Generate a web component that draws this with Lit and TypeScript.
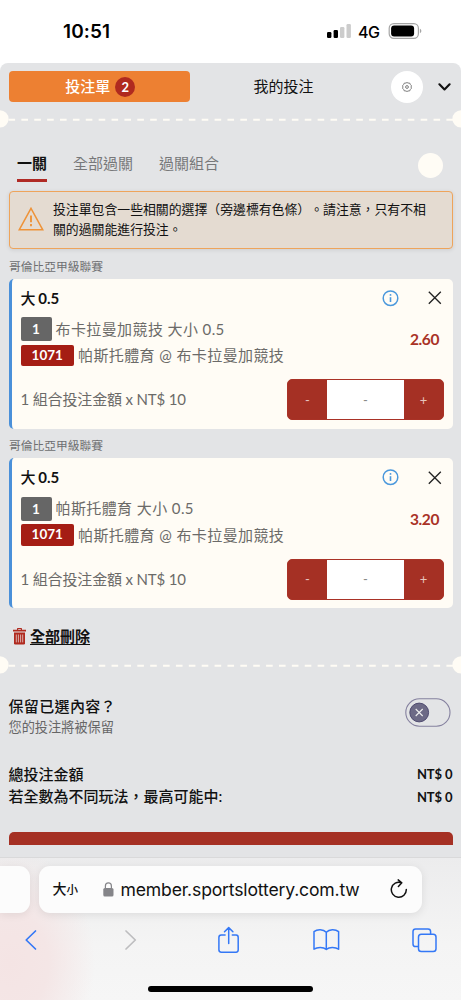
import { LitElement, html, css } from "lit";
import { customElement, property } from "lit/decorators.js";

const shared = css`
  * { box-sizing: border-box; }
  svg { display: block; flex: none; }
  span, a, b { white-space: nowrap; }
`;

@customElement("ticket-divider")
class TicketDivider extends LitElement {
  static styles = [shared, css`:host { display: block; height: 18px; flex: none; }`];
  render() {
    return html`<svg width="461" height="18" viewBox="0 0 461 18">
      <circle cx="0" cy="8.9" r="8.6" fill="#fffcf5" />
      <circle cx="461" cy="8.9" r="8.6" fill="#fffcf5" />
      <path d="M8.5 9.7H461" stroke="#fffcf5" stroke-width="2" stroke-dasharray="6.6 6.28" />
    </svg>`;
  }
}

@customElement("bet-card")
class BetCard extends LitElement {
  @property() league = "";
  @property() market = "";
  @property() odds = "";

  static styles = [shared, css`
    :host { display: block; }
    .league { height: 24px; line-height: 24px; font-size: 11.75px; color: #6e6f71; padding-left: .5px; }
    .card {
      height: 150px; border-radius: 5px; border-left: 3px solid #4a90d9; background: #fffcf5;
      padding: 7.5px 8.5px 0 9px; display: flex; flex-direction: column; color: #6b6a68;
    }
    .head { display: flex; align-items: center; height: 24px; }
    .title { font-size: 15px; font-weight: 500; color: #111; flex: 1; word-spacing: -1px; line-height: 20px; padding-bottom: 1px; }
    .title b { font-weight: 700; }
    .info { margin-right: 29px; }
    .close { margin-right: 2px; }
    .mid { display: flex; justify-content: space-between; margin-top: 7px; height: 50px; }
    .lines { display: flex; flex-direction: column; gap: 3px; }
    .line { display: flex; align-items: center; height: 24px; font-size: 15px; letter-spacing: .4px; gap: 4px; }
    .text { line-height: 20px; padding-bottom: .5px; }
    .tag { color: #fff; font-weight: 700; font-size: 13.5px; border-radius: 2px; text-align: center; letter-spacing: 0; }
    .one { width: 31px; height: 24px; line-height: 24px; background: #666; }
    .code { width: 53.5px; height: 21.5px; line-height: 21px; background: #a51d14; }
    .odds { font-size: 15.5px; font-weight: 700; color: #a93226; padding-top: 12px; padding-right: 5px; line-height: 20px; letter-spacing: -.4px; }
    .foot { display: flex; justify-content: space-between; align-items: center; margin-top: 12px; height: 41px; }
    .stake { font-size: 15px; letter-spacing: -.15px; line-height: 20px; padding-bottom: 1px; }
    .step { display: flex; width: 157px; height: 41px; border: 1px solid #a93226; border-radius: 5px; overflow: hidden; background: #a53024; }
    .btn, .val { display: flex; align-items: center; justify-content: center; font-size: 13px; color: #e7c4bd; }
    .btn { width: 39px; }
    .val { flex: 1; background: #fff; color: #888; }
  `];

  render() {
    return html`
      <div class="league"><span>${this.league}</span></div>
      <div class="card">
        <div class="head">
          <span class="title">大 <b>0.5</b></span>
          <svg class="info" width="17" height="17" viewBox="0 0 17 17" fill="none" stroke="#4a98dc" stroke-width="1.5">
            <circle cx="8.5" cy="8.2" r="7.3" /><path d="M8.5 7.2V12" stroke-width="1.6" /><circle cx="8.5" cy="4.9" r=".95" fill="#4a98dc" stroke="none" />
          </svg>
          <svg class="close" width="14" height="14" viewBox="0 0 14 14" stroke="#222" stroke-width="1.3"><path d="M.8.8 12.8 12.8M12.8.8.8 12.8" /></svg>
        </div>
        <div class="mid">
          <div class="lines">
            <div class="line"><span class="tag one">1</span><span class="text">${this.market}</span></div>
            <div class="line"><span class="tag code">1071</span><span class="text">帕斯托體育 @ 布卡拉曼加競技</span></div>
          </div>
          <span class="odds">${this.odds}</span>
        </div>
        <div class="foot">
          <span class="stake">1 組合投注金額 x NT$ 10</span>
          <div class="step"><div class="btn">-</div><div class="val">-</div><div class="btn">+</div></div>
        </div>
      </div>`;
  }
}

@customElement("app-root")
class AppRoot extends LitElement {
  static styles = [shared, css`
    :host {
      display: flex; flex-direction: column; width: 461px; height: 1000px; overflow: hidden; background: #fff; color: #111;
      font-family: Lato, "Noto Sans CJK TC", sans-serif; font-size: 15px; text-spacing-trim: space-all;
    }
    .status { height: 63px; flex: none; display: flex; padding: 19px 38px 0 63px; font-family: Inter, sans-serif; color: #000; line-height: 25px; }
    .time { font-size: 19px; font-weight: 600; flex: 1; letter-spacing: .1px; }
    .signal { margin: 4px 6px 0 0; }
    .net { font-size: 16px; font-weight: 500; width: 30px; letter-spacing: -.4px; padding-top: .5px; }
    .batt { margin-top: 3px; }
    .sheet { height: 794px; flex: none; background: #e3e4e6; border-radius: 8px 8px 0 0; display: flex; flex-direction: column; }
    .top { display: flex; align-items: center; padding: 7px 10px 7px 8.5px; height: 47px; flex: none; }
    .slip { width: 181.5px; height: 30.5px; background: #ed8032; border-radius: 4px; color: #fff; display: flex; align-items: center; justify-content: center; gap: 5px; padding-left: 2px; }
    .slip span:first-child { line-height: 20px; padding-bottom: 1px; font-weight: 500; }
    .slip .count { width: 20px; height: 20px; border-radius: 50%; background: #b02a1f; font-size: 13px; line-height: 20px; text-align: center; font-weight: 700; }
    .mine { flex: 1; text-align: center; padding: 0 14px 2px 0; }
    .gear { width: 32px; height: 32px; border-radius: 50%; background: #fff; display: grid; place-items: center; margin-right: 15px; }
    .tabs { display: flex; height: 52px; padding: 22px 17px 0; gap: 26px; color: #77787a; flex: none; }
    .tab { height: 32px; line-height: 27px; }
    .on { color: #111; font-weight: 700; border-bottom: 3px solid #b02a25; }
    .dot { margin: 3px 1px 0 auto; width: 25px; height: 25px; border-radius: 50%; background: #fffcf5; }
    .alert {
      margin: 10.5px 8.5px 0; height: 58px; flex: none; border: 1.3px solid #eea45b; border-radius: 4px; background: #e4dbd1;
      display: flex; align-items: center; gap: 9px; padding: 0 0 0 8.5px; box-shadow: 0 1px 4px rgba(0,0,0,.1);
    }
    .alert svg { margin-top: -2px; }
    .msg { font-size: 12.86px; line-height: 19.3px; }
    .list { padding: 6px 8.5px 0; display: flex; flex-direction: column; gap: 5.7px; flex: none; }
    .del { display: flex; align-items: center; gap: 4px; height: 20px; margin: 18px 0 10px 13px; flex: none; font-weight: 700; }
    .del a { text-decoration: underline; text-underline-offset: 2px; line-height: 20px; padding-bottom: 1px; }
    .keep { display: flex; justify-content: space-between; align-items: center; padding: 0 10.5px 0 8.5px; margin-top: 21px; height: 42px; flex: none; }
    .keep svg { margin-bottom: 7px; }
    .kt { display: flex; flex-direction: column; }
    .kt b { font-size: 15px; letter-spacing: .35px; line-height: 21px; font-weight: 500; }
    .kt span { font-size: 13.2px; line-height: 20px; color: #666; }
    .sums { margin-top: 25.5px; padding: 0 8.5px; flex: none; font-weight: 500; }
    .row { display: flex; justify-content: space-between; align-items: center; height: 22.6px; line-height: 22.6px; }
    .amt { font-size: 13px; font-weight: 700; padding-top: 1px; letter-spacing: -.1px; }
    .pay { margin: 24.5px 8.5px 0; height: 13px; border-radius: 5px 5px 0 0; background: #a53024; flex: none; }
    .browser {
      height: 143px; flex: none; border-top: 1px solid #d9d9da; display: flex; flex-direction: column;
      background: radial-gradient(ellipse 85px 115px at 10px 105px, #f4e4e4 0, #f4e6e6 45%, transparent 100%), linear-gradient(#ececed, #f4f4f4 60%, #f6f6f6);
    }
    .urls { display: flex; gap: 9px; margin-top: 8px; height: 47px; }
    .prev { width: 30px; background: #fcfcfc; border-radius: 0 11px 11px 0; box-shadow: 0 2px 8px rgba(0,0,0,.08); }
    .url {
      width: 383px; background: #fcfcfc; border-radius: 11px; display: flex; align-items: center; box-shadow: 0 2px 10px rgba(0,0,0,.09);
      padding: 0 14px 0 13.5px; font-family: Inter, "Noto Sans CJK TC", sans-serif; color: #111;
    }
    .aa { font-size: 14px; font-weight: 500; width: 50.5px; line-height: 20px; }
    .aa small { font-size: 11.5px; }
    .host { font-size: 17.6px; flex: 1; margin-left: 6.5px; letter-spacing: -.17px; }
    .nav { display: flex; justify-content: space-between; align-items: center; padding: 0 23px 0 17px; height: 54px; }
    .nav div { width: 28px; display: flex; justify-content: center; }
    .home { width: 165px; height: 5.5px; border-radius: 3px; background: #000; margin: 19px auto 0 148px; }
  `];

  render() {
    return html`
      <div class="status">
        <span class="time">10:51</span>
        <svg class="signal" width="25" height="16" viewBox="0 0 25 16">
          <rect x="0" y="9" width="4.4" height="6" rx="1.2" /><rect x="6.6" y="7" width="4.4" height="8" rx="1.2" />
          <rect x="13" y="4" width="4.4" height="11" rx="1.2" fill="#ccc" /><rect x="19.5" y="1" width="4.4" height="14" rx="1.2" fill="#ccc" />
        </svg>
        <span class="net">4G</span>
        <svg class="batt" width="35" height="18" viewBox="0 0 34 18">
          <rect x=".7" y="1.7" width="29.2" height="14.6" rx="4.6" fill="none" stroke="#a5a5a5" stroke-width="1.2" />
          <rect x="2.6" y="3.6" width="23" height="10.8" rx="3" /><path d="M31.4 6.8c1.9.7 1.9 3.7 0 4.4z" fill="#a5a5a5" />
        </svg>
      </div>
      <div class="sheet" lang="zh-TW">
        <div class="top">
          <div class="slip"><span>投注單</span><span class="count">2</span></div>
          <span class="mine">我的投注</span>
          <div class="gear"><svg width="10" height="10" viewBox="0 0 10 10" fill="none" stroke="#555" stroke-width=".75">
            <path d="M4 1 5 .5 6 1 7.8 1.2 8.3 2.4 9.5 3.8 9 5 9.5 6.2 8.3 7.5 7.8 8.8 6 9 5 9.5 4 9 2.2 8.8 1.7 7.5.5 6.2 1 5 .5 3.8 1.7 2.4 2.2 1.2Z" stroke-linejoin="round" /><circle cx="5" cy="5" r="1.4" />
          </svg></div>
          <svg width="13" height="9" viewBox="0 0 13 9" fill="none" stroke="#111" stroke-width="2.1" stroke-linecap="round" stroke-linejoin="round"><path d="M1.4 2.3 6.5 7.5 11.6 2.3" /></svg>
        </div>
        <ticket-divider></ticket-divider>
        <div class="tabs">
          <span class="tab on">一關</span><span class="tab">全部過關</span><span class="tab">過關組合</span><div class="dot"></div>
        </div>
        <div class="alert">
          <svg width="26" height="24" viewBox="0 0 26 24" fill="none" stroke="#ee9339" stroke-width="1.5"><path d="M13 1.3 24.8 22.8H1.2Z" /><path d="M13 8.5V15.2M13 17V19.2" stroke-width="1.9" /></svg>
          <div class="msg"><span>投注單包含一些相關的選擇（旁邊標有色條）。請注意，只有不相</span><br /><span>關的過關能進行投注。</span></div>
        </div>
        <div class="list">
          <bet-card league="哥倫比亞甲級聯賽" market="布卡拉曼加競技 大小 0.5" odds="2.60"></bet-card>
          <bet-card league="哥倫比亞甲級聯賽" market="帕斯托體育 大小 0.5" odds="3.20"></bet-card>
        </div>
        <div class="del">
          <svg width="13" height="17" viewBox="0 0 13 17" fill="#b02a1f"><path d="M0 1.8H4V.8Q4 0 4.8 0H8.2Q9 0 9 .8V1.8H13V3.6H0ZM5.2 1V1.8H7.8V1Z" fill-rule="evenodd" /><path d="M1 4.6H12V15.2Q12 16.5 10.7 16.5H2.3Q1 16.5 1 15.2Z" /><path d="M3.3 6.5V14.4M5.4 6.5V14.4M7.6 6.5V14.4M9.7 6.5V14.4" stroke="#e3cfce" stroke-width=".8" /></svg>
          <a>全部刪除</a>
        </div>
        <ticket-divider></ticket-divider>
        <div class="keep">
          <div class="kt"><b>保留已選內容？</b><span>您的投注將被保留</span></div>
          <svg width="46" height="29" viewBox="0 0 46 29" fill="none"><rect x=".8" y=".8" width="44.2" height="27.4" rx="13.7" stroke="#85819f" stroke-width="1.1" /><circle cx="14.2" cy="14.5" r="9.4" fill="#6d6a86" stroke="#4f4b70" /><path d="M10.7 11 17.7 18M17.7 11 10.7 18" stroke="#eee" stroke-width="1.1" /></svg>
        </div>
        <div class="sums">
          <div class="row"><span>總投注金額</span><span class="amt">NT$ 0</span></div>
          <div class="row"><span>若全數為不同玩法，最高可能中:</span><span class="amt">NT$ 0</span></div>
        </div>
        <div class="pay"></div>
      </div>
      <div class="browser" lang="zh-TW">
        <div class="urls">
          <div class="prev"></div>
          <div class="url">
            <span class="aa">大<small>小</small></span>
            <svg width="11" height="15" viewBox="0 0 11 15"><rect x=".3" y="6" width="10.2" height="8.6" rx="1.6" fill="#858589" /><path d="M2.4 6.5V3.9a3 3 0 0 1 6 0V6.5" fill="none" stroke="#858589" stroke-width="1.2" /></svg>
            <span class="host">member.sportslottery.com.tw</span>
            <svg width="18" height="21" viewBox="0 0 18 21" fill="none" stroke="#111" stroke-width="1.5" stroke-linecap="round" stroke-linejoin="round"><path d="M11.4 3.7A7.5 7.5 0 1 0 16.3 10.5M8.2.9 11.8 3.8 8.4 7.4" /></svg>
          </div>
        </div>
        <div class="nav">
          <div><svg width="14" height="22" viewBox="0 0 14 22" fill="none" stroke="#3478f6" stroke-width="1.7" stroke-linecap="round" stroke-linejoin="round"><path d="M11.5 2 2.2 11 11.5 20" /></svg></div>
          <div><svg width="16" height="22" viewBox="-2.5 0 16 22" fill="none" stroke="#bdbdbf" stroke-width="1.7" stroke-linecap="round" stroke-linejoin="round"><path d="M2.5 2 11.8 11 2.5 20" /></svg></div>
          <div><svg width="22" height="28" viewBox="-.7 0 22 28" fill="none" stroke="#3478f6" stroke-width="1.5" stroke-linecap="round" stroke-linejoin="round"><path d="M7.4 9H3.6Q1.2 9 1.2 11.4V23.8Q1.2 26.2 3.6 26.2H18.4Q20.5 26.2 20.5 23.8V11.4Q20.5 9 18.4 9H14.6M11 17.5V1.7M6.8 5.8 11 1.6 15.2 5.8" /></svg></div>
          <div><svg width="28" height="24" viewBox="-.3 0 28 24" fill="none" stroke="#3478f6" stroke-width="1.5" stroke-linejoin="round"><path d="M14 4.2C11 1 5 .9 1.7 3.6V21.2C5 18.9 11 18.9 14 21.4 17 18.9 23 18.9 26.3 21.2V3.6C23 .9 17 1 14 4.2ZM14 4.2V21.4" /></svg></div>
          <div><svg width="25" height="25" viewBox="0 0 25 25" fill="none" stroke="#3478f6" stroke-width="1.5"><path d="M6.5 18.6H3.6Q1 18.6 1 16V3.6Q1 1 3.6 1H16Q18.6 1 18.6 3.6V6.2" /><rect x="6.5" y="6.3" width="17.5" height="17.3" rx="2.8" /></svg></div>
        </div>
        <div class="home"></div>
      </div>`;
  }
}
